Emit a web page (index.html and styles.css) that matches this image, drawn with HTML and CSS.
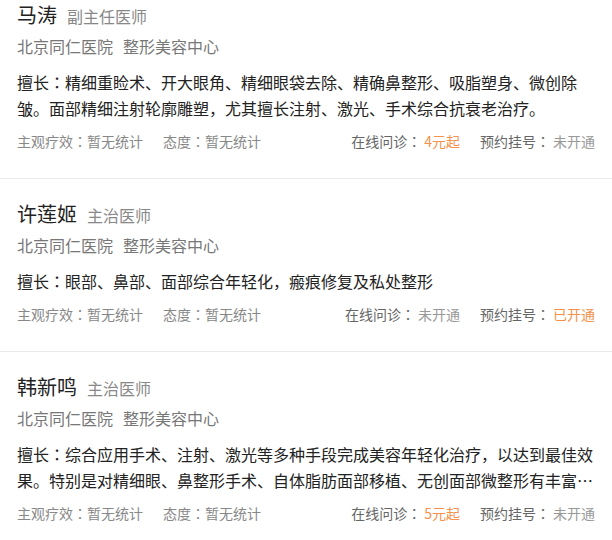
FILE: index.html
```html
<!DOCTYPE html>
<html lang="zh-CN">
<head>
<meta charset="utf-8">
<title>医生列表</title>
<link rel="stylesheet" href="styles.css">
</head>
<body>
<ul class="doctor-list">
  <li class="doctor">
    <div class="doctor-head"><span class="doctor-name">马涛</span><span class="doctor-title">副主任医师</span></div>
    <div class="doctor-hospital"><span>北京同仁医院</span><span>整形美容中心</span></div>
    <p class="doctor-desc">擅长<span class="colon" lang="zh-TW">：</span>精细重睑术、开大眼角、精细眼袋去除、精确鼻整形、吸脂塑身、微创除皱。面部精细注射轮廓雕塑，尤其擅长注射、激光、手术综合抗衰老治疗。</p>
    <div class="doctor-stats">
      <div class="stats-left"><span>主观疗效<span class="colon" lang="zh-TW">：</span>暂无统计</span><span>态度<span class="colon" lang="zh-TW">：</span>暂无统计</span></div>
      <div class="stats-right">
        <span class="stat"><span class="stat-label">在线问诊<span class="colon" lang="zh-TW">：</span></span><span class="stat-value on">4元起</span></span>
        <span class="stat"><span class="stat-label">预约挂号<span class="colon" lang="zh-TW">：</span></span><span class="stat-value">未开通</span></span>
      </div>
    </div>
  </li>
  <li class="doctor">
    <div class="doctor-head"><span class="doctor-name">许莲姬</span><span class="doctor-title">主治医师</span></div>
    <div class="doctor-hospital"><span>北京同仁医院</span><span>整形美容中心</span></div>
    <p class="doctor-desc">擅长<span class="colon" lang="zh-TW">：</span>眼部、鼻部、面部综合年轻化，瘢痕修复及私处整形</p>
    <div class="doctor-stats">
      <div class="stats-left"><span>主观疗效<span class="colon" lang="zh-TW">：</span>暂无统计</span><span>态度<span class="colon" lang="zh-TW">：</span>暂无统计</span></div>
      <div class="stats-right">
        <span class="stat"><span class="stat-label">在线问诊<span class="colon" lang="zh-TW">：</span></span><span class="stat-value">未开通</span></span>
        <span class="stat"><span class="stat-label">预约挂号<span class="colon" lang="zh-TW">：</span></span><span class="stat-value on">已开通</span></span>
      </div>
    </div>
  </li>
  <li class="doctor">
    <div class="doctor-head"><span class="doctor-name">韩新鸣</span><span class="doctor-title">主治医师</span></div>
    <div class="doctor-hospital"><span>北京同仁医院</span><span>整形美容中心</span></div>
    <p class="doctor-desc">擅长<span class="colon" lang="zh-TW">：</span>综合应用手术、注射、激光等多种手段完成美容年轻化治疗，以达到最佳效果。特别是对精细眼、鼻整形手术、自体脂肪面部移植、无创面部微整形有丰富…</p>
    <div class="doctor-stats">
      <div class="stats-left"><span>主观疗效<span class="colon" lang="zh-TW">：</span>暂无统计</span><span>态度<span class="colon" lang="zh-TW">：</span>暂无统计</span></div>
      <div class="stats-right">
        <span class="stat"><span class="stat-label">在线问诊<span class="colon" lang="zh-TW">：</span></span><span class="stat-value on">5元起</span></span>
        <span class="stat"><span class="stat-label">预约挂号<span class="colon" lang="zh-TW">：</span></span><span class="stat-value">未开通</span></span>
      </div>
    </div>
  </li>
</ul>
</body>
</html>
```
FILE: styles.css
```css
html, body {
  margin: 0;
  padding: 0;
  background: #fff;
}
body {
  font-family: "Noto Sans CJK SC", "Microsoft YaHei", sans-serif;
  color: #333;
  overflow: hidden;
}
.colon {
  font-family: "Noto Sans CJK TC", "Noto Sans CJK SC", sans-serif;
}
.doctor-list {
  list-style: none;
  margin: -20px 0 0;
  padding: 0;
}
.doctor {
  padding: 22px 17px 27px;
  border-bottom: 1px solid #ebebeb;
}
.doctor-head {
  display: flex;
  align-items: baseline;
  gap: 10px;
  line-height: 26px;
}
.doctor-name {
  font-size: 20px;
  color: #222;
}
.doctor-title {
  font-size: 16px;
  color: #888;
}
.doctor-hospital {
  display: flex;
  gap: 10px;
  margin-top: 3px;
  font-size: 16px;
  line-height: 28px;
  color: #777;
}
.doctor-desc {
  margin: 9px 0 0;
  font-size: 16px;
  line-height: 26px;
  color: #222;
}
.doctor-stats {
  display: flex;
  justify-content: space-between;
  margin-top: 10px;
  font-size: 14px;
  line-height: 20px;
}
.stats-left {
  display: flex;
  gap: 20px;
  color: #888;
}
.stats-right {
  display: flex;
  gap: 20px;
}
.stat-label {
  color: #666;
}
.stat-value {
  margin-left: 3px;
  color: #999;
}
.stat-value.on {
  color: #f5914a;
}
```
